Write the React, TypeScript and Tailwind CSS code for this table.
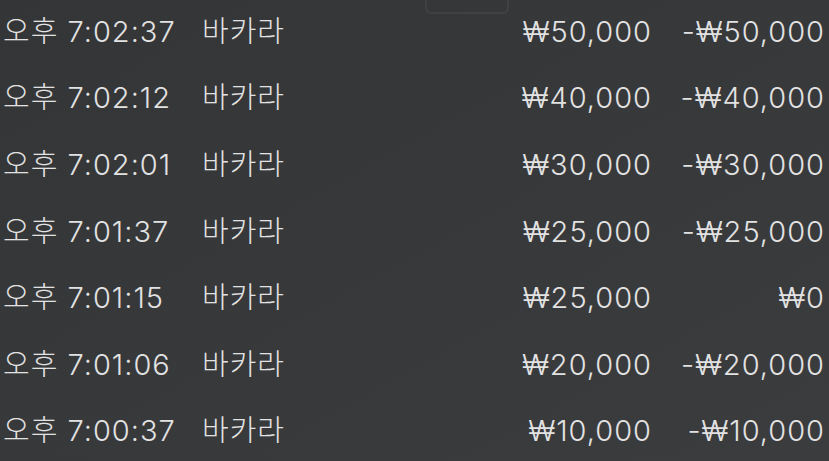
const rows = [
  { time: '오후 7:02:37', game: '바카라', bet: '₩50,000', result: '-₩50,000' },
  { time: '오후 7:02:12', game: '바카라', bet: '₩40,000', result: '-₩40,000' },
  { time: '오후 7:02:01', game: '바카라', bet: '₩30,000', result: '-₩30,000' },
  { time: '오후 7:01:37', game: '바카라', bet: '₩25,000', result: '-₩25,000' },
  { time: '오후 7:01:15', game: '바카라', bet: '₩25,000', result: '₩0' },
  { time: '오후 7:01:06', game: '바카라', bet: '₩20,000', result: '-₩20,000' },
  { time: '오후 7:00:37', game: '바카라', bet: '₩10,000', result: '-₩10,000' },
];

// Bet history list on a dark sheet; the page behind only shows as a faint outline.
export default function App() {
  return (
    <div
      className="relative h-[461px] w-[829px] overflow-hidden bg-gradient-to-br from-[#343537] to-[#3b3c3e] text-[#e2e2e2]"
      style={{ fontFamily: 'Inter, "Noto Sans CJK KR", sans-serif' }}
    >
      <div className="pointer-events-none absolute left-[425px] top-[-10px] h-[24px] w-[84px] rounded-md border-2 border-white/5" />

      <div className="relative -mt-[2px] flex flex-col pl-[3px] pr-[4px]">
        {rows.map((r, i) => (
          <div key={i} className="flex h-[66.6px] items-center text-[29px] font-light leading-none tracking-[1px]">
            <span className="w-[199px] shrink-0 whitespace-nowrap">{r.time}</span>
            <span className="flex-1 whitespace-nowrap">{r.game}</span>
            <span className="whitespace-nowrap text-right">{r.bet}</span>
            <span className="w-[173px] shrink-0 whitespace-nowrap text-right">{r.result}</span>
          </div>
        ))}
      </div>
    </div>
  );
}
